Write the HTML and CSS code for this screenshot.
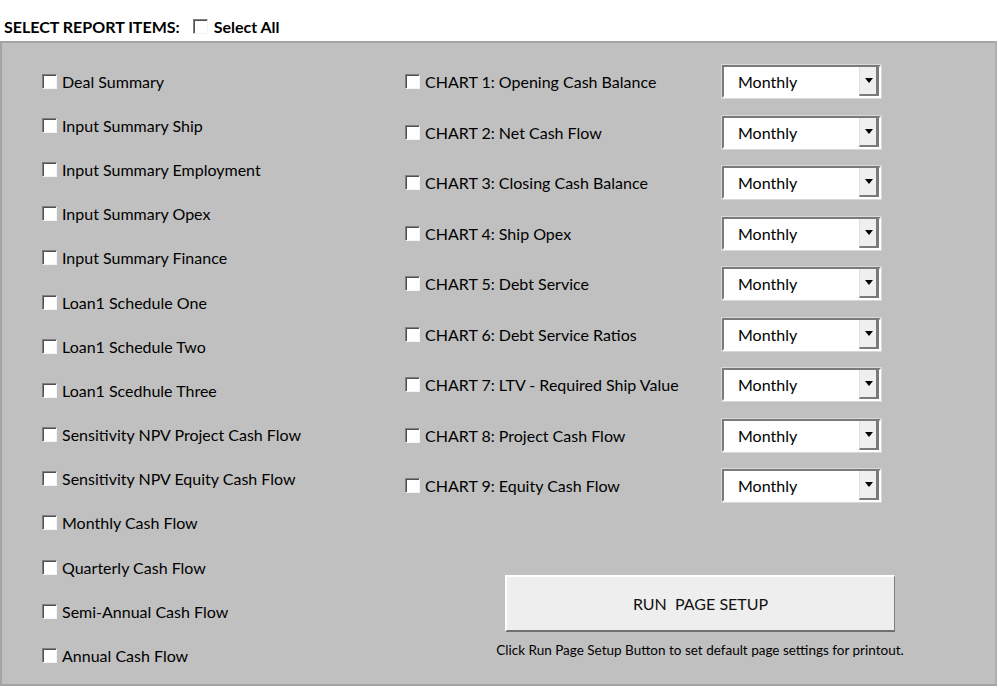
FILE: index.html
```html
<!DOCTYPE html>
<html lang="en">
<head>
    <meta charset="UTF-8">
    <title>Select Report Items</title>
    <link rel="stylesheet" href="styles.css">
</head>
<body>

    <!-- Header -->
    <header class="top-bar">
        <span class="top-title">SELECT REPORT ITEMS:</span>
        <label class="select-all"><span class="chk"></span>Select All</label>
    </header>

    <!-- Report Panel -->
    <div class="panel">
        <div class="col-left">
            <label class="item"><span class="chk"></span>Deal Summary</label>
            <label class="item"><span class="chk"></span>Input Summary Ship</label>
            <label class="item"><span class="chk"></span>Input Summary Employment</label>
            <label class="item"><span class="chk"></span>Input Summary Opex</label>
            <label class="item"><span class="chk"></span>Input Summary Finance</label>
            <label class="item"><span class="chk"></span>Loan1 Schedule One</label>
            <label class="item"><span class="chk"></span>Loan1 Schedule Two</label>
            <label class="item"><span class="chk"></span>Loan1 Scedhule Three</label>
            <label class="item"><span class="chk"></span>Sensitivity NPV Project Cash Flow</label>
            <label class="item"><span class="chk"></span>Sensitivity NPV Equity Cash Flow</label>
            <label class="item"><span class="chk"></span>Monthly Cash Flow</label>
            <label class="item"><span class="chk"></span>Quarterly Cash Flow</label>
            <label class="item"><span class="chk"></span>Semi-Annual Cash Flow</label>
            <label class="item"><span class="chk"></span>Annual Cash Flow</label>
        </div>

        <div class="col-right">
            <div class="charts">
                <div class="chart-row">
                    <label class="chart-label"><span class="chk"></span>CHART 1: Opening Cash Balance</label>
                    <div class="combo"><span class="combo-text">Monthly</span><span class="combo-btn"><i class="arrow"></i></span></div>
                </div>
                <div class="chart-row">
                    <label class="chart-label"><span class="chk"></span>CHART 2: Net Cash Flow</label>
                    <div class="combo"><span class="combo-text">Monthly</span><span class="combo-btn"><i class="arrow"></i></span></div>
                </div>
                <div class="chart-row">
                    <label class="chart-label"><span class="chk"></span>CHART 3: Closing Cash Balance</label>
                    <div class="combo"><span class="combo-text">Monthly</span><span class="combo-btn"><i class="arrow"></i></span></div>
                </div>
                <div class="chart-row">
                    <label class="chart-label"><span class="chk"></span>CHART 4: Ship Opex</label>
                    <div class="combo"><span class="combo-text">Monthly</span><span class="combo-btn"><i class="arrow"></i></span></div>
                </div>
                <div class="chart-row">
                    <label class="chart-label"><span class="chk"></span>CHART 5: Debt Service</label>
                    <div class="combo"><span class="combo-text">Monthly</span><span class="combo-btn"><i class="arrow"></i></span></div>
                </div>
                <div class="chart-row">
                    <label class="chart-label"><span class="chk"></span>CHART 6: Debt Service Ratios</label>
                    <div class="combo"><span class="combo-text">Monthly</span><span class="combo-btn"><i class="arrow"></i></span></div>
                </div>
                <div class="chart-row">
                    <label class="chart-label"><span class="chk"></span>CHART 7: LTV - Required Ship Value</label>
                    <div class="combo"><span class="combo-text">Monthly</span><span class="combo-btn"><i class="arrow"></i></span></div>
                </div>
                <div class="chart-row">
                    <label class="chart-label"><span class="chk"></span>CHART 8: Project Cash Flow</label>
                    <div class="combo"><span class="combo-text">Monthly</span><span class="combo-btn"><i class="arrow"></i></span></div>
                </div>
                <div class="chart-row">
                    <label class="chart-label"><span class="chk"></span>CHART 9: Equity Cash Flow</label>
                    <div class="combo"><span class="combo-text">Monthly</span><span class="combo-btn"><i class="arrow"></i></span></div>
                </div>
            </div>

            <!-- Page Setup -->
            <div class="setup">
                <button class="setup-btn">RUN&nbsp; PAGE SETUP</button>
                <p class="setup-note">Click Run Page Setup Button to set default page settings for printout.</p>
            </div>
        </div>
    </div>

</body>
</html>
```

FILE: styles.css
```css
/* Global Styles */
* {
    margin: 0;
    padding: 0;
    box-sizing: border-box;
}

body {
    background: #ffffff;
    color: #000;
    font-family: 'Lato', 'Open Sans', sans-serif;
    font-size: 16px;
    width: 998px;
    height: 690px;
    overflow: hidden;
}

/* Header */
.top-bar {
    height: 41px;
    display: flex;
    align-items: center;
    padding: 11px 0 0 4px;
    font-weight: 700;
    font-size: 16px;
}

.select-all {
    display: flex;
    align-items: center;
    margin-left: 13px;
}

.select-all .chk {
    margin-right: 6px;
}

/* Checkbox */
.chk {
    display: inline-block;
    width: 15px;
    height: 15px;
    flex: none;
    background: #fff;
    border-top: 1px solid #808080;
    border-left: 1px solid #808080;
    border-right: 1px solid #f4f4f4;
    border-bottom: 1px solid #f4f4f4;
    box-shadow: inset 1px 1px 0 #505050;
    margin-right: 5px;
}

/* Panel */
.panel {
    width: 997px;
    height: 645px;
    background: #c0c0c0;
    border: 2px solid #a4a4a4;
    border-right-color: #b0b0b0;
    display: flex;
}

.col-left {
    width: 403px;
    padding: 16px 0 0 40px;
    display: flex;
    flex-direction: column;
}

.item {
    height: 44.2px;
    display: flex;
    align-items: center;
    white-space: nowrap;
}

/* Charts */
.col-right {
    flex: 1;
    padding-top: 22px;
}

.chart-row {
    height: 50.5px;
    display: flex;
    align-items: flex-start;
}

.chart-label {
    width: 317px;
    height: 33px;
    display: flex;
    align-items: center;
    white-space: nowrap;
}

/* Combo box */
.combo {
    width: 159px;
    height: 33px;
    display: flex;
    background: #fff;
    border-top: 2px solid #7a7a7a;
    border-left: 2px solid #7a7a7a;
    border-right: 2px solid #fff;
    border-bottom: 2px solid #fff;
    box-shadow: 0 0 0 1px #d8d8d8;
}

.combo-text {
    flex: 1;
    display: flex;
    align-items: center;
    padding-left: 14px;
    font-size: 16px;
}

.combo-btn {
    width: 20px;
    display: flex;
    align-items: center;
    justify-content: center;
    background: #efefef;
    border-left: 1px solid #e0e0e0;
    border-right: 3px solid #7a7a7a;
    border-bottom: 2px solid #7a7a7a;
}

.arrow {
    width: 0;
    height: 0;
    border-left: 4px solid transparent;
    border-right: 4px solid transparent;
    border-top: 5px solid #000;
    margin-left: 2px;
}

/* Page Setup */
.setup {
    width: 390px;
    margin: 55px 0 0 100px;
    display: flex;
    flex-direction: column;
    align-items: center;
}

.setup-btn {
    width: 390px;
    height: 57px;
    background: #eeeeee;
    border: none;
    border-top: 2px solid #fff;
    border-left: 2px solid #fff;
    border-right: 1px solid #808080;
    border-bottom: 2px solid #707070;
    font-family: 'Lato', 'Open Sans', sans-serif;
    font-size: 16px;
    color: #111;
}

.setup-note {
    margin-top: 10px;
    font-size: 13.5px;
    white-space: nowrap;
}
```
